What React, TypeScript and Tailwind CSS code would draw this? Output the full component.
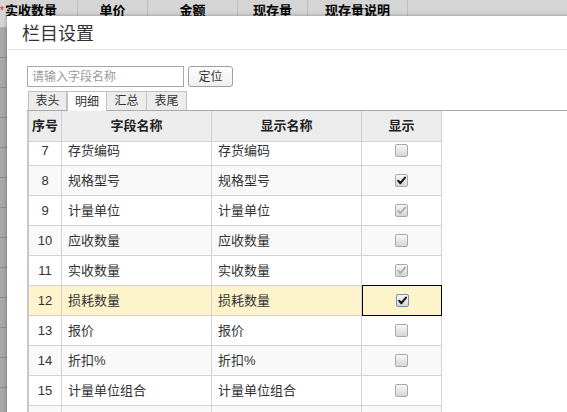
import React from "react";

type Row = { no: number; name: string; state: "off" | "on" | "dis" | "focus" };

const rows: Row[] = [
  { no: 7, name: "存货编码", state: "off" },
  { no: 8, name: "规格型号", state: "on" },
  { no: 9, name: "计量单位", state: "dis" },
  { no: 10, name: "应收数量", state: "off" },
  { no: 11, name: "实收数量", state: "dis" },
  { no: 12, name: "损耗数量", state: "focus" },
  { no: 13, name: "报价", state: "off" },
  { no: 14, name: "折扣%", state: "off" },
  { no: 15, name: "计量单位组合", state: "off" },
  { no: 16, name: "", state: "off" },
];

function Check({ state }: { state: Row["state"] }) {
  const border = state === "focus" ? "border-[#7a8db5]" : "border-[#a9a9a9]";
  const stroke = state === "dis" ? "#b0b0b0" : "#1a1a1a";
  return (
    <span
      className={`flex w-[13px] h-[13px] items-center justify-center rounded-[2px] border ${border} bg-gradient-to-b from-[#f8f8f8] to-[#d6d6d6]`}
    >
      {state !== "off" && (
        <svg width="11" height="11" viewBox="0 0 11 11">
          <path d="M2.2 5.8 L4.4 8.2 L9 2.6" fill="none" stroke={stroke} strokeWidth="2.1" strokeLinecap="round" strokeLinejoin="round" />
        </svg>
      )}
    </span>
  );
}

export default function App() {
  const font = { fontFamily: '"Liberation Sans", "Noto Sans CJK SC", sans-serif' };
  return (
    <div className="relative w-[567px] h-[412px] overflow-hidden bg-[#a9a9a9]" style={font}>
      {/* background grid */}
      <div className="flex h-[28px] bg-[#d5d5d5] border-b border-[#b5b5b5] text-[13px] font-bold text-black leading-[22px]">
        <div className="w-[78px] border-r border-[#bdbdbd] pl-[5px] relative">
          <span className="absolute left-[0px] top-[0px] text-[#e02020] text-[10px] font-normal">*</span>
          实收数量
        </div>
        <div className="w-[70px] border-r border-[#bdbdbd] text-center">单价</div>
        <div className="w-[90px] border-r border-[#bdbdbd] text-center">金额</div>
        <div className="w-[70px] border-r border-[#bdbdbd] text-center">现存量</div>
        <div className="w-[100px] border-r border-[#bdbdbd] text-center">现存量说明</div>
        <div className="flex-1" />
      </div>
      <div className="flex flex-col">
        {Array.from({ length: 13 }).map((_, i) => (
          <div key={i} className="h-[30px] border-b border-[#8e8e8e]" />
        ))}
      </div>

      {/* dialog */}
      <div className="absolute left-[7px] top-[16px] w-[600px] h-[460px] bg-white shadow-[0_0_4px_rgba(0,0,0,0.35)] flex flex-col">
        <div className="shrink-0 h-[34px] border-b border-[#e5e5e5] pl-[15px] pt-[3px] flex items-center text-[18px] text-[#333]">
          栏目设置
        </div>
        <div className="shrink-0 pl-[20px] pt-[16px] flex flex-col">
          <div className="flex gap-[4px] items-center">
            <div className="w-[157px] h-[21px] border border-[#a9a9a9] flex items-center pl-[4px] text-[12px] text-[#9a9a9a]">
              请输入字段名称
            </div>
            <div className="w-[45px] h-[21px] border border-[#a0a0a0] rounded-[3px] bg-gradient-to-b from-white to-[#f0f0f0] flex items-center justify-center text-[12px] text-[#333]">
              定位
            </div>
          </div>
          <div className="mt-[4px] flex h-[20px] border-b border-[#a9a9a9] items-end pl-[1px]">
            <div className="w-[39px] h-[19px] border border-b-0 border-[#c2c2c2] bg-[#ececec] text-[12px] text-[#333] flex items-center justify-center">表头</div>
            <div className="w-[40px] h-[20px] -mb-px border border-b-0 border-[#c2c2c2] bg-white text-[12px] text-[#333] flex items-center justify-center">明细</div>
            <div className="w-[40px] h-[19px] border border-b-0 border-l-0 border-[#c2c2c2] bg-[#ececec] text-[12px] text-[#333] flex items-center justify-center">汇总</div>
            <div className="w-[40px] h-[19px] border border-b-0 border-l-0 border-[#c2c2c2] bg-[#ececec] text-[12px] text-[#333] flex items-center justify-center">表尾</div>
          </div>
          <div className="w-[415px] border-l-2 border-[#c8c8c8]">
            <div className="grid grid-cols-[33px_150px_150px_80px] h-[31px] bg-[#ececec] text-[13px] font-bold text-[#222] border-b border-[#d0d0d0]">
              <div className="flex items-center justify-center border-r border-[#d0d0d0]">序号</div>
              <div className="flex items-center justify-center border-r border-[#d0d0d0]">字段名称</div>
              <div className="flex items-center justify-center border-r border-[#d0d0d0]">显示名称</div>
              <div className="flex items-center justify-center border-r border-[#d0d0d0]">显示</div>
            </div>
            <div className="h-[300px] overflow-hidden">
              <div className="-mt-[6px]">
                {rows.map((r, i) => {
                  const bg = r.no === 12 ? "bg-[#fdf4cc]" : i % 2 === 1 ? "bg-[#f9f9f9]" : "bg-white";
                  return (
                    <div key={r.no} className={`grid grid-cols-[33px_150px_150px_80px] h-[30px] border-b border-[#d3d3d3] text-[13px] text-[#333] ${bg}`}>
                      <div className="flex items-center justify-center border-r border-[#d3d3d3]">{r.no === 16 ? "" : r.no}</div>
                      <div className="flex items-center pl-[6px] border-r border-[#d3d3d3]">{r.name}</div>
                      <div className="flex items-center pl-[6px] border-r border-[#d3d3d3]">{r.name}</div>
                      <div className={`flex items-center justify-center ${r.no === 12 ? "border border-black -mt-px h-[31px]" : "border-r border-[#d3d3d3]"}`}>
                        {r.no !== 16 && <Check state={r.state} />}
                      </div>
                    </div>
                  );
                })}
              </div>
            </div>
          </div>
        </div>
      </div>
    </div>
  );
}
